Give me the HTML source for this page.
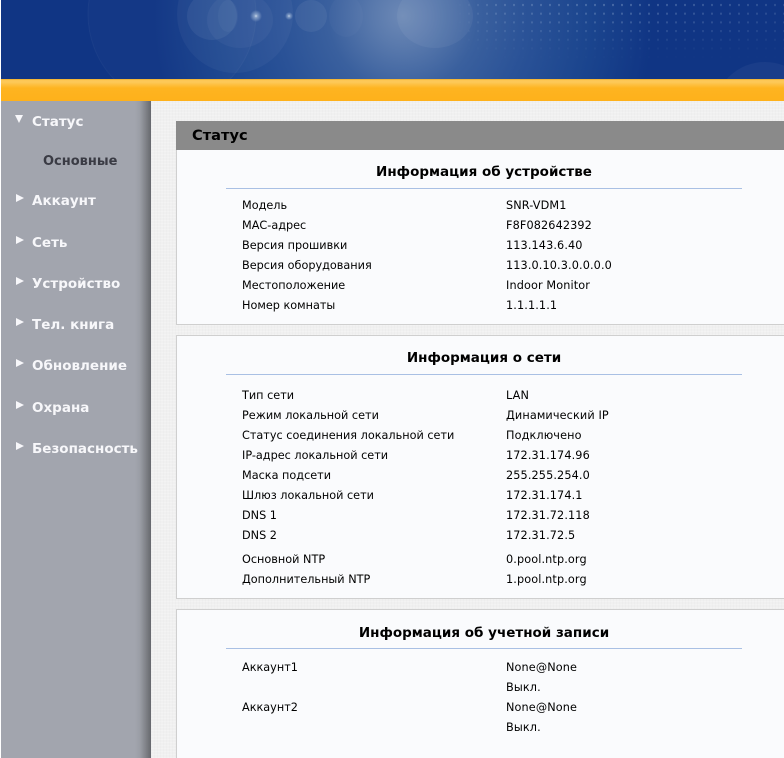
<!DOCTYPE html>
<html><head><meta charset="utf-8">
<style>
html,body{margin:0;padding:0;background:#fff}
body{width:784px;height:758px;overflow:hidden;position:relative;font-family:"DejaVu Sans","Liberation Sans",sans-serif}
#wrap{position:absolute;left:0;top:0;width:784px;height:758px;overflow:hidden}
.a{position:absolute}
.t{position:absolute;font-size:11.25px;line-height:20px;height:20px;margin-top:1px;color:#000;white-space:nowrap}
.t[style*="left:506"]{letter-spacing:.12px}
.h{position:absolute;left:226px;width:516px;text-align:center;font-weight:bold;font-size:13.5px;line-height:20px;margin-top:1px;color:#000;white-space:nowrap}
.l{position:absolute;left:226px;width:516px;height:1px;background:#a9c0e4}
.p{position:absolute;left:176px;width:620px;background:#fafbfd;border:1px solid #cfcfcf;box-sizing:border-box}
.m{position:absolute;left:32px;font-size:13.5px;font-weight:bold;color:#f7f7fa;line-height:20px;margin-top:1px;white-space:nowrap}
.tri{position:absolute;left:16px;width:0;height:0;border-top:4.5px solid transparent;border-bottom:4.5px solid transparent;border-left:8px solid #f7f7fa}
</style></head><body><div id="wrap">
<svg class="a" style="left:1px;top:0" width="783" height="79" viewBox="1 0 783 79">
<defs>
<radialGradient id="g" gradientUnits="userSpaceOnUse" cx="403" cy="16" r="250">
<stop offset="0" stop-color="#6d89b6"/><stop offset=".12" stop-color="#5a7aad"/><stop offset=".3" stop-color="#3a609e"/><stop offset=".5" stop-color="#2a5297"/><stop offset=".75" stop-color="#1b458e"/><stop offset="1" stop-color="#103584"/></radialGradient>
<radialGradient id="s"><stop offset="0" stop-color="#cfdcec"/><stop offset=".3" stop-color="#9fb6d6" stop-opacity=".7"/><stop offset="1" stop-color="#9fb6d6" stop-opacity="0"/></radialGradient>
<pattern id="d" width="9" height="8.7" patternUnits="userSpaceOnUse" x="484" y="1"><rect x="2.4" y="3" width="1.2" height="2" fill="#a9c0de"/></pattern>
<linearGradient id="fx" gradientUnits="userSpaceOnUse" x1="455" x2="784" y1="0" y2="0"><stop offset="0" stop-color="#000"/><stop offset=".12" stop-color="#777"/><stop offset=".5" stop-color="#999"/><stop offset="1" stop-color="#555"/></linearGradient>
<linearGradient id="fv" x1="0" x2="0" y1="0" y2="1"><stop offset="0" stop-color="#fff"/><stop offset=".45" stop-color="#999"/><stop offset=".8" stop-color="#222"/><stop offset="1" stop-color="#000"/></linearGradient>
<mask id="mk" maskUnits="userSpaceOnUse" x="455" y="0" width="329" height="62"><rect x="455" width="329" height="62" fill="url(#fx)"/></mask>
<mask id="mk2" maskUnits="userSpaceOnUse" x="455" y="0" width="329" height="62"><rect x="455" width="329" height="62" fill="url(#fv)"/></mask>
</defs>
<rect x="1" width="783" height="79" fill="#12378a"/>
<rect x="1" width="783" height="79" fill="url(#g)"/>
<ellipse cx="172" cy="14" rx="84" ry="90" fill="#fff" fill-opacity=".02" stroke="#fff" stroke-opacity=".04"/>
<ellipse cx="235" cy="14" rx="58" ry="59" fill="#fff" fill-opacity=".04"/>
<ellipse cx="212" cy="16" rx="25" ry="24" fill="#fff" fill-opacity=".06"/>
<ellipse cx="240" cy="20" rx="33" ry="28" fill="#fff" fill-opacity=".04"/>
<ellipse cx="228" cy="16" rx="10" ry="16" fill="#fff" fill-opacity=".035"/>
<ellipse cx="311" cy="16" rx="16" ry="16" fill="#fff" fill-opacity=".06"/>
<ellipse cx="346" cy="16" rx="17" ry="21" fill="#fff" fill-opacity=".025"/>
<ellipse cx="435" cy="16" rx="38" ry="32" fill="#fff" fill-opacity=".05"/>
<circle cx="256" cy="16" r="6" fill="url(#s)"/>
<circle cx="289" cy="16" r="4" fill="url(#s)"/>
<g mask="url(#mk)"><g mask="url(#mk2)"><rect x="455" width="329" height="62" fill="url(#d)"/></g></g>
<ellipse cx="765" cy="110" rx="50" ry="48" fill="#fff" fill-opacity=".045"/>
</svg>
<div class="a" style="left:1px;top:79px;width:783px;height:22px;background:linear-gradient(#e9a51d 0,#fdc653 1px,#fdc95a 3px,#feb421 9px,#feb11b 100%)"></div>
<div class="a" style="left:151px;top:101px;width:633px;height:657px;background-color:#f0f0f0;background-image:repeating-linear-gradient(0deg,rgba(255,255,255,.18) 0 1px,transparent 1px 3px),repeating-linear-gradient(90deg,rgba(0,0,0,.012) 0 1px,transparent 1px 3px)"></div>
<div class="a" style="left:1px;top:101px;width:150px;height:657px;background:linear-gradient(90deg,#a2a5ae 0,#a2a5ae 134px,#9a9da5 139px,#7f8187 145px,#66686d 150px)"></div>

<div class="tri" style="left:15px;top:115px;border:0;border-left:4.5px solid transparent;border-right:4.5px solid transparent;border-top:8px solid #f7f7fa"></div>
<div class="m" style="top:111px">Статус</div>
<div class="a" style="left:43px;top:152px;font-size:13px;font-weight:bold;color:#3a3b44;line-height:20px">Основные</div>
<div class="tri" style="top:194px"></div><div class="m" style="top:190px">Аккаунт</div>
<div class="tri" style="top:236px"></div><div class="m" style="top:232px">Сеть</div>
<div class="tri" style="top:277px"></div><div class="m" style="top:273px">Устройство</div>
<div class="tri" style="top:318px"></div><div class="m" style="top:314px">Тел. книга</div>
<div class="tri" style="top:359px"></div><div class="m" style="top:355px">Обновление</div>
<div class="tri" style="top:401px"></div><div class="m" style="top:397px">Охрана</div>
<div class="tri" style="top:442px"></div><div class="m" style="top:438px">Безопасность</div>

<div class="a" style="left:176px;top:121px;width:608px;height:29px;background:#8a8a8a"></div>
<div class="a" style="left:192px;top:126px;font-size:14.6px;font-weight:bold;color:#000;line-height:20px">Статус</div>

<div class="p" style="top:150px;height:175px;border-top:0"></div>
<div class="h" style="top:161px">Информация об устройстве</div>
<div class="l" style="top:188px"></div>
<div class="t" style="left:242px;top:195px">Модель</div><div class="t" style="left:506px;top:195px">SNR-VDM1</div>
<div class="t" style="left:242px;top:215px">МАС-адрес</div><div class="t" style="left:506px;top:215px">F8F082642392</div>
<div class="t" style="left:242px;top:235px">Версия прошивки</div><div class="t" style="left:506px;top:235px">113.143.6.40</div>
<div class="t" style="left:242px;top:255px">Версия оборудования</div><div class="t" style="left:506px;top:255px">113.0.10.3.0.0.0.0</div>
<div class="t" style="left:242px;top:275px">Местоположение</div><div class="t" style="left:506px;top:275px">Indoor Monitor</div>
<div class="t" style="left:242px;top:295px">Номер комнаты</div><div class="t" style="left:506px;top:295px">1.1.1.1.1</div>

<div class="p" style="top:335px;height:264px"></div>
<div class="h" style="top:347px">Информация о сети</div>
<div class="l" style="top:374px"></div>
<div class="t" style="left:242px;top:385px">Тип сети</div><div class="t" style="left:506px;top:385px">LAN</div>
<div class="t" style="left:242px;top:405px">Режим локальной сети</div><div class="t" style="left:506px;top:405px">Динамический IP</div>
<div class="t" style="left:242px;top:425px">Статус соединения локальной сети</div><div class="t" style="left:506px;top:425px">Подключено</div>
<div class="t" style="left:242px;top:445px">IP-адрес локальной сети</div><div class="t" style="left:506px;top:445px">172.31.174.96</div>
<div class="t" style="left:242px;top:465px">Маска подсети</div><div class="t" style="left:506px;top:465px">255.255.254.0</div>
<div class="t" style="left:242px;top:485px">Шлюз локальной сети</div><div class="t" style="left:506px;top:485px">172.31.174.1</div>
<div class="t" style="left:242px;top:505px">DNS 1</div><div class="t" style="left:506px;top:505px">172.31.72.118</div>
<div class="t" style="left:242px;top:525px">DNS 2</div><div class="t" style="left:506px;top:525px">172.31.72.5</div>
<div class="t" style="left:242px;top:549px">Основной NTP</div><div class="t" style="left:506px;top:549px">0.pool.ntp.org</div>
<div class="t" style="left:242px;top:569px">Дополнительный NTP</div><div class="t" style="left:506px;top:569px">1.pool.ntp.org</div>

<div class="p" style="top:609px;height:170px"></div>
<div class="h" style="top:622px">Информация об учетной записи</div>
<div class="l" style="top:648px"></div>
<div class="t" style="left:242px;top:657px">Аккаунт1</div><div class="t" style="left:506px;top:657px">None@None</div>
<div class="t" style="left:506px;top:677px">Выкл.</div>
<div class="t" style="left:242px;top:697px">Аккаунт2</div><div class="t" style="left:506px;top:697px">None@None</div>
<div class="t" style="left:506px;top:717px">Выкл.</div>
</div></body></html>
